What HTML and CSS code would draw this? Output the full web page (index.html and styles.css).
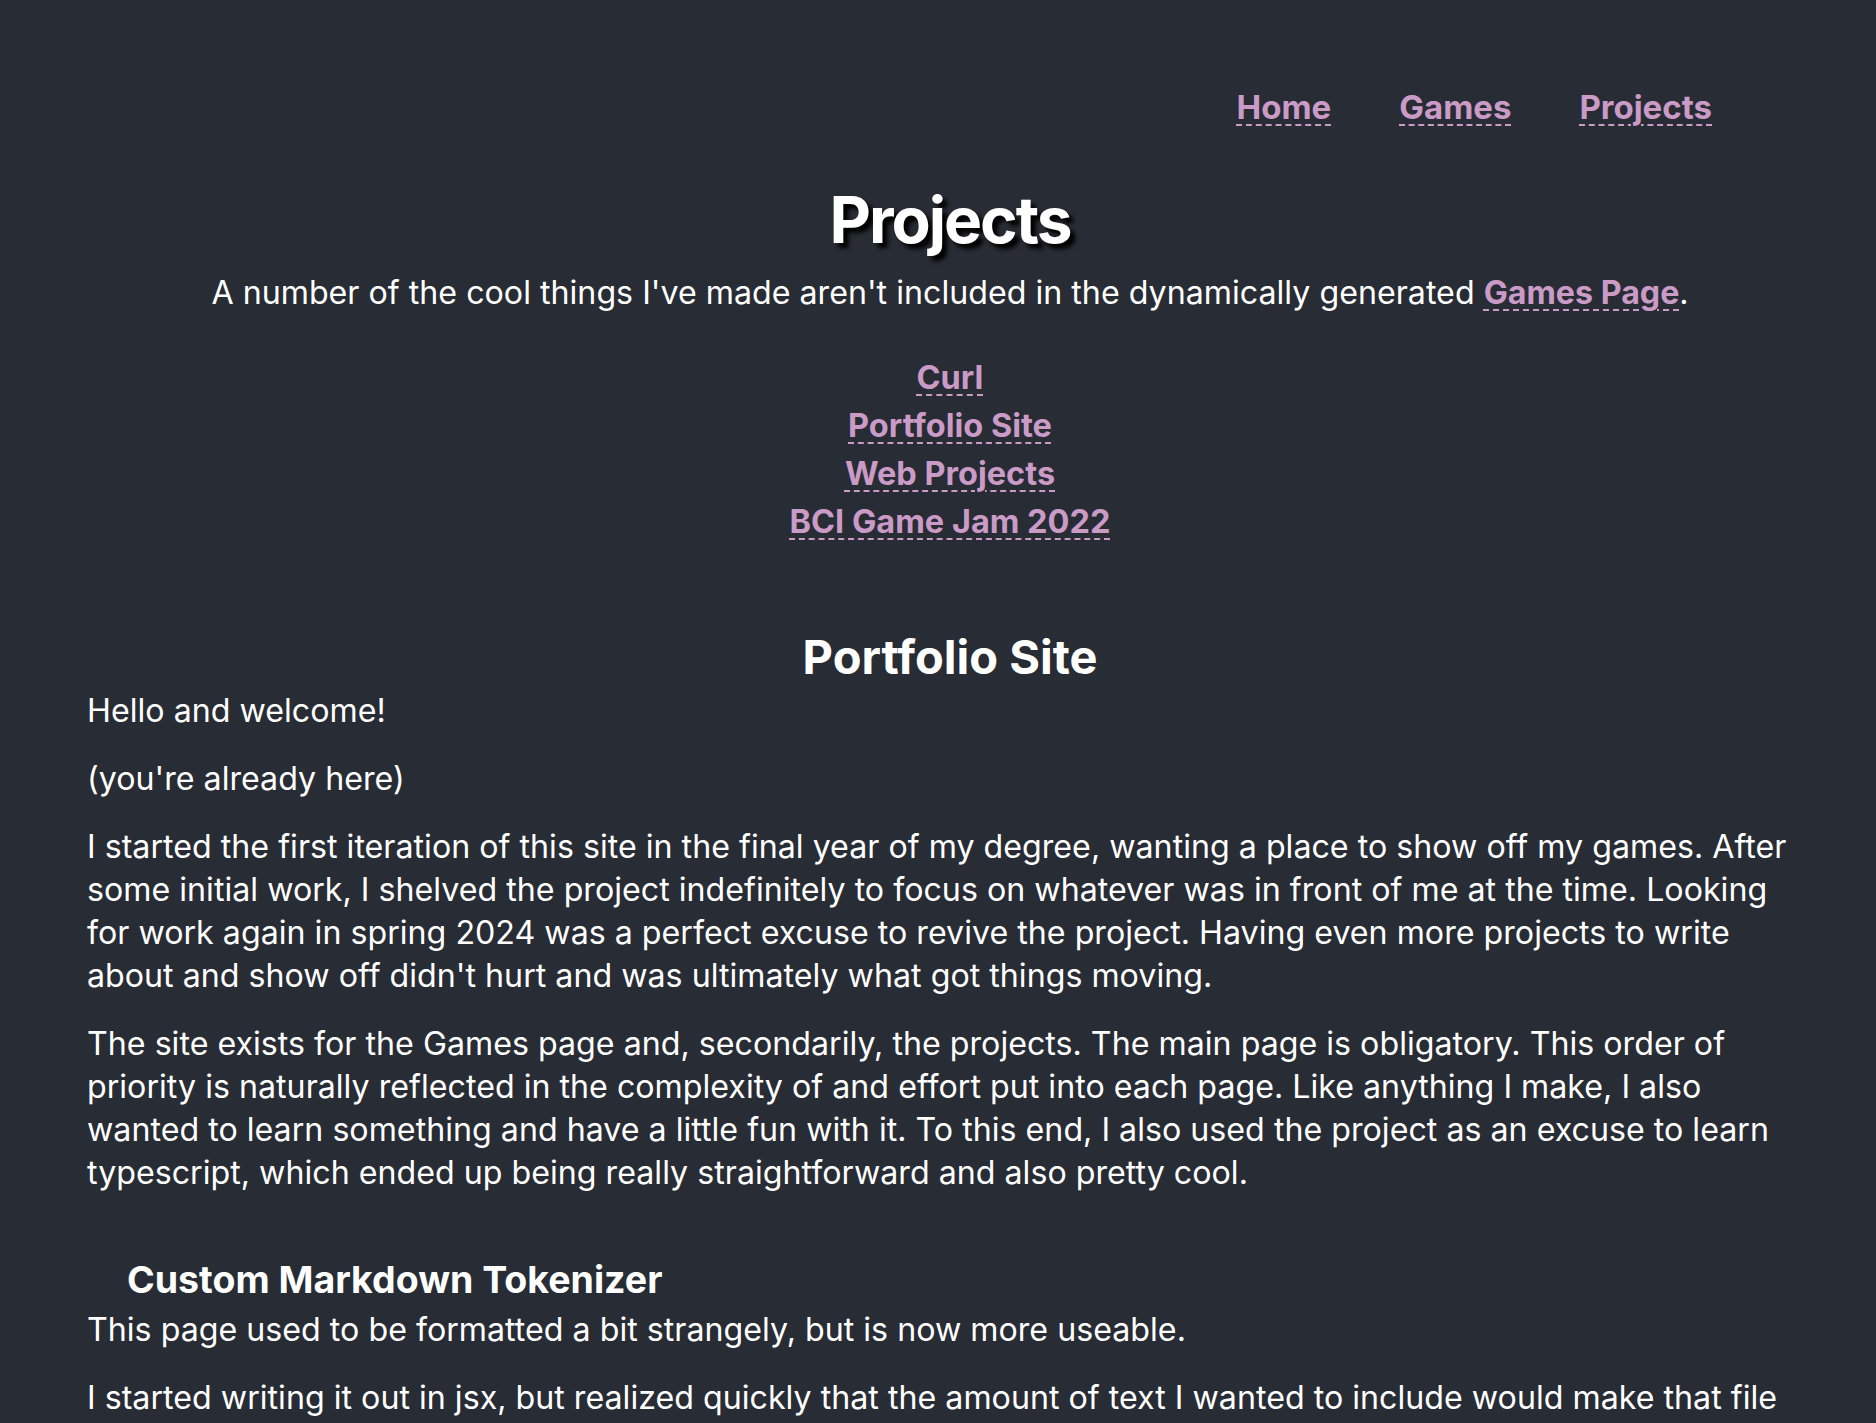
FILE: index.html
```html
<!DOCTYPE html>
<html lang="en">
<head>
<meta charset="utf-8">
<title>Projects</title>
<link rel="stylesheet" href="styles.css">
</head>
<body>
<header class="site-nav">
  <a class="link nav-link" href="#">Home</a>
  <a class="link nav-link" href="#">Games</a>
  <a class="link nav-link" href="#">Projects</a>
</header>
<main class="page">
  <h1 class="page-title">Projects</h1>
  <p class="intro">A number of the cool things I've made aren't included in the dynamically generated <a class="link" href="#">Games Page</a>.</p>
  <nav class="toc">
    <a class="link" href="#">Curl</a>
    <a class="link" href="#">Portfolio Site</a>
    <a class="link" href="#">Web Projects</a>
    <a class="link" href="#">BCI Game Jam 2022</a>
  </nav>
  <section class="project">
    <h2 class="project-title">Portfolio Site</h2>
    <p>Hello and welcome!</p>
    <p>(you're already here)</p>
    <p>I started the first iteration of this site in the final year of my degree, wanting a place to show off my games. After some initial work, I shelved the project indefinitely to focus on whatever was in front of me at the time. Looking for work again in spring 2024 was a perfect excuse to revive the project. Having even more projects to write about and show off didn't hurt and was ultimately what got things moving.</p>
    <p>The site exists for the Games page and, secondarily, the projects. The main page is obligatory. This order of priority is naturally reflected in the complexity of and effort put into each page. Like anything I make, I also wanted to learn something and have a little fun with it. To this end, I also used the project as an excuse to learn typescript, which ended up being really straightforward and also pretty cool.</p>
    <h3 class="sub-title">Custom Markdown Tokenizer</h3>
    <p>This page used to be formatted a bit strangely, but is now more useable.</p>
    <p>I started writing it out in jsx, but realized quickly that the amount of text I wanted to include would make that file difficult to maintain, so I wrote a small tokenizer to turn markdown into components.</p>
  </section>
</main>
</body>
</html>
```
FILE: styles.css
```css
html, body {
  margin: 0;
  padding: 0;
}

body {
  background: #282c34;
  color: #ffffff;
  font-family: "Inter", "DejaVu Sans", sans-serif;
  font-size: 32.2px;
  line-height: 43px;
  overflow: hidden;
}

.link {
  color: #c99bc6;
  font-weight: 700;
  text-decoration: underline dashed;
  text-decoration-thickness: 2px;
  text-underline-offset: 5px;
}

.site-nav {
  display: flex;
  justify-content: flex-end;
  gap: 68px;
  padding: 87px 164px 0 0;
  height: 40px;
  font-size: 33px;
  line-height: 40px;
}

.page {
  padding: 0 63px 40px 87px;
}

.page-title {
  margin: 53px 0 0;
  text-align: center;
  font-size: 64px;
  line-height: 80px;
  font-weight: 700;
  letter-spacing: -2px;
  text-shadow: 5px 5px 4px #000;
}

.intro {
  margin: 11px 0 0;
  text-align: center;
}

.toc {
  display: flex;
  flex-direction: column;
  align-items: center;
  margin-top: 40px;
  font-size: 32.5px;
  line-height: 48px;
}

.project {
  margin-top: 85px;
}

.project-title {
  margin: 0 0 6px;
  text-align: center;
  font-size: 47px;
  line-height: 52px;
  font-weight: 700;
}

.project p {
  margin: 0 23px 25px 0;
}

.sub-title {
  margin: 66px 0 8px 40px;
  font-size: 37.5px;
  line-height: 40px;
  font-weight: 700;
}
```
